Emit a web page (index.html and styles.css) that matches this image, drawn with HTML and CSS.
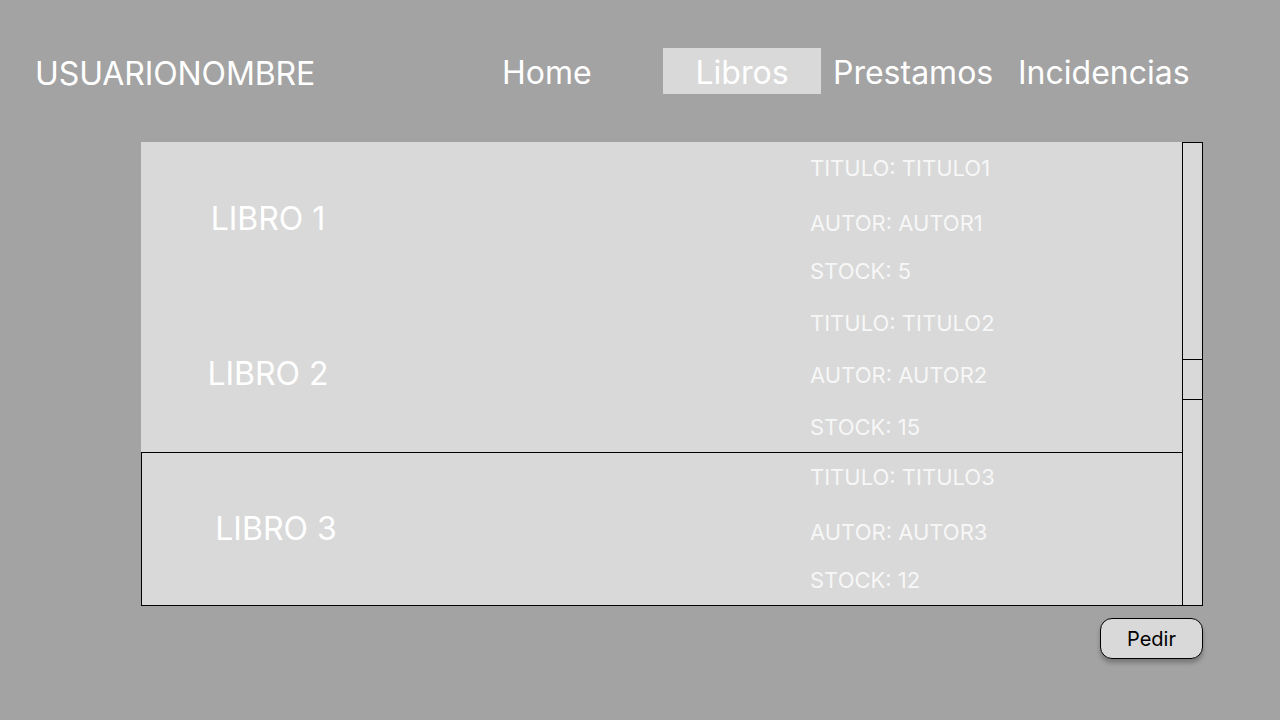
FILE: index.html
```html
<!DOCTYPE html>
<html lang="es">
<head>
<meta charset="utf-8">
<title>Libros</title>
<link rel="stylesheet" href="styles.css">
</head>
<body>
<header class="header">
  <div class="username">USUARIONOMBRE</div>
  <nav class="nav">
    <a class="nav-item nav-home">Home</a>
    <a class="nav-item nav-libros active">Libros</a>
    <a class="nav-item nav-prestamos">Prestamos</a>
    <a class="nav-item nav-incidencias">Incidencias</a>
  </nav>
</header>

<main class="content">
  <section class="panel">
    <div class="list">
      <div class="row row-a">
        <div class="book-name">LIBRO 1</div>
        <div class="info">
          <div class="line">TITULO: TITULO1</div>
          <div class="line">AUTOR: AUTOR1</div>
          <div class="line">STOCK: 5</div>
        </div>
      </div>
      <div class="row">
        <div class="book-name">LIBRO 2</div>
        <div class="info">
          <div class="line">TITULO: TITULO2</div>
          <div class="line">AUTOR: AUTOR2</div>
          <div class="line">STOCK: 15</div>
        </div>
      </div>
      <div class="row row-a row-selected">
        <div class="book-name">LIBRO 3</div>
        <div class="info">
          <div class="line">TITULO: TITULO3</div>
          <div class="line">AUTOR: AUTOR3</div>
          <div class="line">STOCK: 12</div>
        </div>
      </div>
    </div>
    <div class="scrollbar">
      <div class="thumb"></div>
    </div>
  </section>
  <div class="actions">
    <button class="btn">Pedir</button>
  </div>
</main>
</body>
</html>
```

FILE: styles.css
```css
* { box-sizing: border-box; }

html, body {
  margin: 0;
  padding: 0;
}

body {
  width: 1280px;
  height: 720px;
  overflow: hidden;
  background: #a3a3a3;
  font-family: Inter, "Noto Sans", "Liberation Sans", sans-serif;
  color: #ffffff;
}

.header {
  display: flex;
  align-items: flex-start;
  padding-top: 48px;
  padding-left: 35px;
  height: 94px;
}

.username {
  width: 467px;
  font-size: 32px;
  line-height: 46px;
  padding-top: 3px;
  letter-spacing: -0.1px;
}

.nav {
  display: flex;
  align-items: flex-start;
}

.nav-item {
  display: block;
  font-size: 32px;
  line-height: 46px;
  height: 46px;
  padding-top: 2px;
  color: #ffffff;
  white-space: nowrap;
}

.nav-home { width: 161px; }

.nav-libros {
  width: 158px;
  text-align: center;
  background: #d9d9d9;
}

.nav-prestamos {
  width: 197px;
  padding-left: 12px;
}

.content {
  margin-top: 48px;
  margin-left: 141px;
  width: 1062px;
}

.panel {
  display: flex;
  height: 464px;
}

.list {
  width: 1041px;
  background: #d9d9d9;
  display: flex;
  flex-direction: column;
}

.row {
  display: flex;
  height: 155px;
}

.row-selected {
  height: 154px;
  border-left: 1px solid #000;
  border-top: 1px solid #000;
  border-bottom: 1px solid #000;
}

.book-name {
  width: 254px;
  display: flex;
  align-items: center;
  justify-content: center;
  font-size: 32px;
  padding-bottom: 2px;
}

.row-selected .book-name {
  width: 268px;
}

.info {
  margin-left: 415px;
  display: flex;
  flex-direction: column;
  gap: 24px;
  padding-top: 12px;
}

.row-a .info .line:nth-child(2) { margin-top: 3px; }
.row-a .info .line:nth-child(3) { margin-top: -4px; }

.row-selected .info {
  margin-left: 400px;
  padding-top: 10px;
}

.line {
  font-size: 22px;
  line-height: 28px;
  white-space: nowrap;
  color: #f7f7f7;
}

.scrollbar {
  width: 21px;
  height: 464px;
  border: 1px solid #000;
  background: #d9d9d9;
}

.thumb {
  margin-top: 216px;
  height: 41px;
  border-top: 1px solid #000;
  border-bottom: 1px solid #000;
}

.actions {
  display: flex;
  justify-content: flex-end;
  margin-top: 12px;
}

.btn {
  width: 103px;
  height: 41px;
  border: 1px solid #000;
  border-radius: 12px;
  background: #d9d9d9;
  box-shadow: 0 4px 4px rgba(0, 0, 0, 0.25);
  font-family: Inter, "Noto Sans", "Liberation Sans", sans-serif;
  font-size: 20px;
  color: #000;
  padding: 0;
}
```
